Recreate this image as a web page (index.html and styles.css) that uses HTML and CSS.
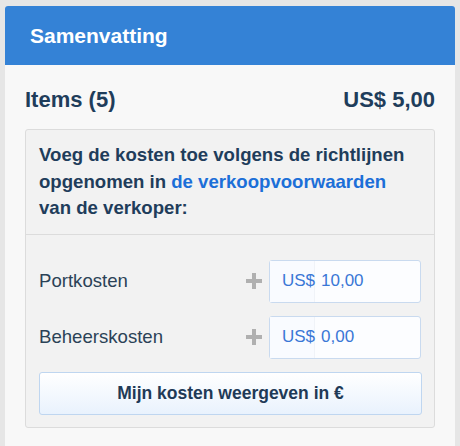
FILE: index.html
```html
<!DOCTYPE html>
<html lang="nl">
<head>
<meta charset="utf-8">
<title>Samenvatting</title>
<link rel="stylesheet" href="styles.css">
</head>
<body>
<div class="card">
  <div class="card-header">Samenvatting</div>
  <div class="card-body">
    <div class="total-row">
      <span>Items (5)</span>
      <span>US$ 5,00</span>
    </div>
    <div class="costs">
      <div class="costs-head">Voeg de kosten toe volgens de richtlijnen opgenomen in <a href="#" class="link">de verkoopvoorwaarden</a> van de verkoper:</div>
      <div class="costs-body">
        <div class="cost-row">
          <span class="label">Portkosten</span>
          <svg class="plus" width="16" height="16" viewBox="0 0 16 16"><path d="M6 0h4v6h6v4h-6v6h-4v-6h-6v-4h6z" fill="#b0b0b0"/></svg>
          <div class="input"><span class="prefix">US$</span><span class="value">10,00</span></div>
        </div>
        <div class="cost-row">
          <span class="label">Beheerskosten</span>
          <svg class="plus" width="16" height="16" viewBox="0 0 16 16"><path d="M6 0h4v6h6v4h-6v6h-4v-6h-6v-4h6z" fill="#b0b0b0"/></svg>
          <div class="input"><span class="prefix">US$</span><span class="value">0,00</span></div>
        </div>
        <button class="btn">Mijn kosten weergeven in €</button>
      </div>
    </div>
  </div>
</div>
</body>
</html>
```
FILE: styles.css
```css
html, body {
  margin: 0;
  padding: 0;
}
body {
  background: #e6e6e6;
  font-family: "Liberation Sans", Arial, sans-serif;
  color: #1f3d5b;
  padding: 6px 5px 0 5px;
  height: 446px;
  box-sizing: border-box;
  overflow: hidden;
}
.card {
  width: 450px;
  background: #f8f8f8;
  border-radius: 3px 3px 0 0;
  min-height: 460px;
}
.card-header {
  background: #3482d6;
  color: #ffffff;
  font-weight: bold;
  font-size: 21px;
  height: 59px;
  line-height: 59px;
  padding-left: 25px;
  border-radius: 3px 3px 0 0;
}
.card-body {
  padding: 22px 20px 0 20px;
}
.total-row {
  display: flex;
  justify-content: space-between;
  font-weight: bold;
  font-size: 22px;
  line-height: 26px;
  height: 26px;
  padding-left: 0;
}
.costs {
  margin-top: 16px;
  background: #f2f2f2;
  border: 1px solid #dcdcdc;
  border-radius: 3px;
}
.costs-head {
  padding: 12px 13px;
  font-weight: bold;
  font-size: 18.6px;
  line-height: 26.5px;
  border-bottom: 1px solid #dcdcdc;
}
.link {
  color: #1c6fd8;
  text-decoration: none;
}
.costs-body {
  padding: 25px 13px 12px 13px;
  display: flex;
  flex-direction: column;
  gap: 13px;
}
.cost-row {
  display: flex;
  align-items: center;
  height: 43px;
}
.label {
  flex: 1;
  font-size: 18.6px;
  color: #2b4257;
}
.plus {
  margin-right: 7px;
}
.input {
  width: 150px;
  height: 41px;
  border: 1px solid #c9daef;
  border-radius: 3px;
  background: #fcfdff;
  display: flex;
  align-items: stretch;
  font-size: 17px;
  color: #3a77d6;
}
.prefix {
  width: 45px;
  padding-left: 12px;
  box-sizing: border-box;
  display: flex;
  align-items: center;
  background: #f9fbff;
  border-right: 1px solid #f0f3f8;
}
.value {
  display: flex;
  align-items: center;
  padding-left: 6px;
}
.btn {
  height: 43px;
  width: 383px;
  margin: 0;
  border: 1px solid #bfd6f0;
  border-radius: 3px;
  background: linear-gradient(#ffffff, #e9f2fd);
  font-family: "Liberation Sans", Arial, sans-serif;
  font-weight: bold;
  font-size: 17.5px;
  color: #1f3a57;
  cursor: pointer;
}
```
